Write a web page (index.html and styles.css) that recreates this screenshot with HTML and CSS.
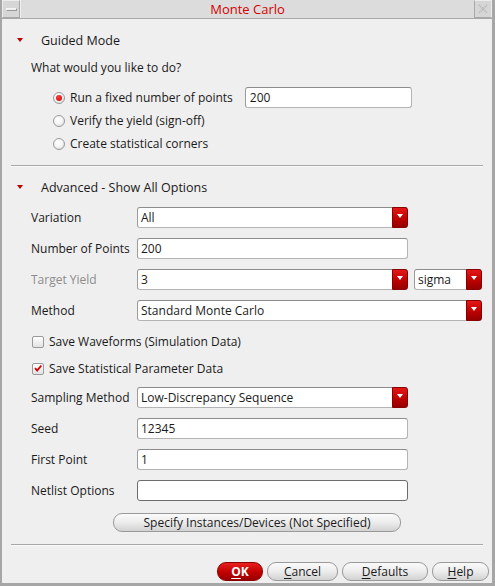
FILE: index.html
```html
<!DOCTYPE html>
<html>
<head>
<meta charset="utf-8">
<link rel="stylesheet" href="styles.css">
</head>
<body>
<div class="window">
  <div class="titlebar">
    <div class="tb-btn"><span class="min-bar"></span></div>
    <div class="title">Monte Carlo</div>
    <div class="tb-btn">
      <svg width="12" height="12" viewBox="0 0 12 12"><path d="M2 2 L10 10 M10 2 L2 10" stroke="#b8b8b8" stroke-width="2" stroke-dasharray="1 1" fill="none"/></svg>
    </div>
  </div>
  <div class="content">
    <div class="section-head"><span class="tri"></span><span>Guided Mode</span></div>
    <div class="question">What would you like to do?</div>
    <div class="radios">
      <div class="radio-row"><span class="radio on"></span><span class="rlabel">Run a fixed number of points</span><div class="field guided">200</div></div>
      <div class="radio-row"><span class="radio"></span><span class="rlabel">Verify the yield (sign-off)</span></div>
      <div class="radio-row"><span class="radio"></span><span class="rlabel">Create statistical corners</span></div>
    </div>
    <div class="sep sep1"></div>
    <div class="section-head adv"><span class="tri"></span><span>Advanced - Show All Options</span></div>
    <div class="form">
      <div class="row"><span class="label">Variation</span><div class="field select w271"><span class="val">All</span><span class="drop"></span></div></div>
      <div class="row"><span class="label">Number of Points</span><div class="field w271"><span class="val">200</span></div></div>
      <div class="row"><span class="label dim">Target Yield</span><div class="field select w271"><span class="val">3</span><span class="drop"></span></div><div class="field select sigma"><span class="val">sigma</span><span class="drop"></span></div></div>
      <div class="row"><span class="label">Method</span><div class="field select w345"><span class="val">Standard Monte Carlo</span><span class="drop"></span></div></div>
      <div class="row check-row c1"><span class="check"></span><span>Save Waveforms (Simulation Data)</span></div>
      <div class="row check-row c2"><span class="check on"><svg width="12" height="12" viewBox="0 0 12 12"><path d="M2.5 6.2 L5 9 L10 3" stroke="#d40000" stroke-width="2.2" fill="none"/></svg></span><span>Save Statistical Parameter Data</span></div>
      <div class="row r-samp"><span class="label">Sampling Method</span><div class="field select w271"><span class="val">Low-Discrepancy Sequence</span><span class="drop"></span></div></div>
      <div class="row"><span class="label">Seed</span><div class="field w271"><span class="val">12345</span></div></div>
      <div class="row"><span class="label">First Point</span><div class="field w271"><span class="val">1</span></div></div>
      <div class="row"><span class="label">Netlist Options</span><div class="field w271 dark"></div></div>
    </div>
    <div class="specify-wrap"><div class="pill specify">Specify Instances/Devices (Not Specified)</div></div>
    <div class="sep sep2"></div>
    <div class="buttons">
      <div class="pill ok"><u>O</u>K</div>
      <div class="pill cancel"><u>C</u>ancel</div>
      <div class="pill defaults"><u>D</u>efaults</div>
      <div class="pill help"><u>H</u>elp</div>
    </div>
  </div>
</div>
</body>
</html>
```
FILE: styles.css
```css
* { box-sizing: border-box; }
html, body { margin: 0; padding: 0; }
body {
  font-family: "Open Sans", "Noto Sans", sans-serif;
  font-size: 12px;
  color: #1a1a1a;
  background: #efefef;
}
.window {
  width: 495px;
  height: 586px;
  background: #efefef;
  border-left: 2px solid #a6a6a6;
  border-right: 3px solid #a6a6a6;
  border-bottom: 3px solid #a6a6a6;
  display: flex;
  flex-direction: column;
}
.titlebar {
  height: 19px;
  display: flex;
  background: #dcdcdc;
  border-bottom: 1px solid #a8a8a8;
}
.tb-btn {
  width: 18px;
  height: 18px;
  border: 1px solid #ececec;
  border-right-color: #a8a8a8;
  border-bottom-color: #a8a8a8;
  display: flex;
  align-items: center;
  justify-content: center;
  background: #d6d6d6;
}
.tb-btn:last-child { border-left: 1px solid #a8a8a8; border-right-color: #ececec; }
.min-bar {
  width: 11px;
  height: 3px;
  background: #ececec;
  border: 1px solid #9a9a9a;
  border-top-color: #f5f5f5;
  border-left-color: #f5f5f5;
}
.title {
  flex: 1;
  text-align: center;
  color: #d40000;
  font-size: 13px;
  line-height: 18px;
  border-left: 1px solid #efefef;
}
.content {
  flex: 1;
  display: flex;
  flex-direction: column;
  padding: 0 0 0 9px;
}
.section-head {
  height: 20px;
  margin-top: 11px;
  display: flex;
  align-items: center;
  font-size: 12.5px;
}
.section-head.adv { margin-top: 10px; }
.tri {
  width: 0;
  height: 0;
  border-left: 3.5px solid transparent;
  border-right: 3.5px solid transparent;
  border-top: 4px solid #c00000;
  margin-left: 6px;
  margin-right: 18px;
}
.question {
  height: 16px;
  line-height: 16px;
  margin-top: 10px;
  padding-left: 20px;
  font-size: 12px;
}
.radios {
  margin-top: 10px;
  display: flex;
  flex-direction: column;
}
.radio-row {
  height: 23px;
  display: flex;
  align-items: center;
  padding-left: 42px;
}
.radio {
  width: 12px;
  height: 12px;
  border-radius: 50%;
  border: 1px solid #9a9a9a;
  background: radial-gradient(circle at 40% 35%, #ffffff 0%, #f4f4f4 50%, #d0d0d0 100%);
  margin-right: 5px;
  display: flex;
  align-items: center;
  justify-content: center;
}
.radio.on::after {
  content: "";
  width: 6px;
  height: 6px;
  border-radius: 50%;
  background: radial-gradient(circle at 40% 35%, #ff4040, #c80000);
}
.rlabel { font-size: 12px; }
.field {
  height: 21px;
  background: #ffffff;
  border: 1px solid #b4b4b4;
  border-top-color: #8c8c8c;
  border-left-color: #9c9c9c;
  border-radius: 3px;
  display: flex;
  align-items: center;
  font-size: 12px;
  position: relative;
}
.field.guided {
  width: 167px;
  margin-left: 12px;
  padding-left: 4px;
  height: 21px;
}
.field .val { padding-left: 3px; flex: 1; white-space: nowrap; overflow: hidden; }
.field.dark { border-color: #6c6c6c; }
.w271 { width: 271px; }
.w345 { width: 345px; }
.sigma { width: 68px; margin-left: 6px; }
.drop {
  width: 16px;
  height: 21px;
  margin: -1px -1px -1px 0;
  border-radius: 0 3px 3px 0;
  background: linear-gradient(#e41818, #b80000 60%, #960000);
  border: 1px solid #8a0000;
  display: flex;
  justify-content: center;
  padding-top: 6px;
}
.drop::after {
  content: "";
  width: 0;
  height: 0;
  border-left: 3px solid transparent;
  border-right: 3px solid transparent;
  border-top: 4px solid #ffffff;
}
.sep {
  height: 2px;
  width: 472px;
  border-top: 1px solid #a8a8a8;
  border-bottom: 1px solid #fafafa;
}
.sep1 { margin-top: 10px; }
.form { display: flex; flex-direction: column; }
.row {
  height: 21px;
  margin-top: 10px;
  display: flex;
  align-items: center;
  font-size: 12px;
}
.label {
  width: 126px;
  padding-left: 20px;
  flex: none;
  white-space: nowrap;
}
.label.dim { color: #8c8c8c; }
.check-row { padding-left: 21px; }
.check-row.c2 { margin-top: 6px; }
.r-samp { margin-top: 8px; }
.check {
  width: 12px;
  height: 12px;
  border: 1px solid #9a9a9a;
  border-radius: 2px;
  background: linear-gradient(#ffffff, #e2e2e2);
  margin-right: 5px;
  display: flex;
  align-items: center;
  justify-content: center;
}
.check svg { display: block; margin-top: -1px; }
.pill {
  height: 19px;
  border-radius: 9px;
  border: 1px solid #9a9a9a;
  background: linear-gradient(#fafafa, #ececec 50%, #d2d2d2);
  display: flex;
  align-items: center;
  justify-content: center;
  font-size: 12px;
  color: #1a1a1a;
}
.specify-wrap { margin-top: 12px; padding-left: 102px; display: flex; }
.specify { width: 288px; }
.sep2 { margin-top: 12px; }
.buttons {
  margin-top: 16px;
  display: flex;
  justify-content: flex-end;
  gap: 4px;
  padding-right: 3px;
}
.ok {
  width: 46px;
  background: linear-gradient(#e82020, #c00000 55%, #9a0000);
  border-color: #8a0000;
  color: #ffffff;
  font-weight: bold;
}
.cancel { width: 71px; }
.defaults { width: 86px; }
.help { width: 57px; }
u { text-decoration-thickness: 1px; text-underline-offset: 2px; }
```
